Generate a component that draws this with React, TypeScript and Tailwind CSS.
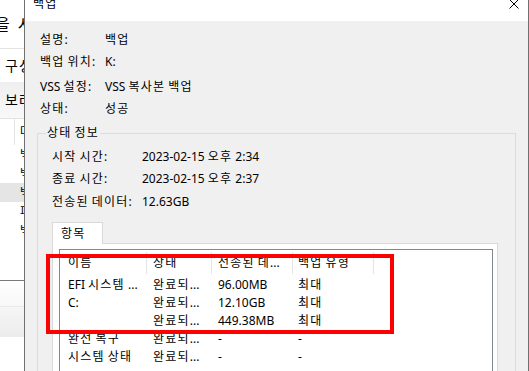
import React from "react";

const HANGUL = /([\uAC00-\uD7A3]+)/;

function T({ s }: { s: string }) {
  const parts = s.split(HANGUL);
  return (
    <span>
      {parts.map((p, i) =>
        p === "" ? null : /[\uAC00-\uD7A3]/.test(p) ? (
          <span key={i} className="tracking-[1.2px]">
            {p}
          </span>
        ) : (
          <React.Fragment key={i}>{p}</React.Fragment>
        )
      )}
    </span>
  );
}

function BackgroundWindow() {
  const glyphRows = ["백", "백", "백", "파", "백"];
  return (
    <div className="flex flex-col w-full h-full">
      <div className="h-[49px] shrink-0 border-b border-[#e3e3e3] flex items-center text-[16px] leading-none whitespace-nowrap">
        <span className="-ml-[5px]">을</span>
        <span className="ml-[8px]">시작</span>
      </div>
      <div className="h-[33px] shrink-0 flex items-center pl-[5px] text-[14px] leading-none whitespace-nowrap">
        <T s="구성" />
      </div>
      <div className="h-[37px] shrink-0 flex items-center pl-[5px] text-[14px] leading-none whitespace-nowrap bg-gradient-to-b from-[#efefef] to-[#f8f8f8] border-b border-[#e2e2e2]">
        <T s="보러" />
      </div>
      <div className="h-[162px] shrink-0 flex flex-col border-b border-[#7a7a7a]">
        <div className="h-[26px] flex items-stretch">
          <div className="w-[15px] h-full border-r border-[#e5e5e5]" />
          <div className="flex items-center pl-[5px] leading-none whitespace-nowrap">마</div>
        </div>
        {glyphRows.map((g, i) => (
          <div
            key={i}
            className={
              i === 2
                ? "h-[19px] flex items-center pl-[20px] leading-none whitespace-nowrap bg-[#e5e5e5]"
                : "h-[19px] flex items-center pl-[20px] leading-none whitespace-nowrap"
            }
          >
            {g}
          </div>
        ))}
      </div>
      <div className="h-[26px] shrink-0 bg-gradient-to-b from-white to-[#f8f8f8] border-b border-[#e8e8e8]" />
      <div className="h-[30px] shrink-0 bg-gradient-to-b from-[#f6f6f6] to-[#ececec]" />
    </div>
  );
}

function InfoRow({ label, value, labelW, extra }: { label: string; value: string; labelW: string; extra?: string }) {
  return (
    <div className={"flex h-[22px] items-center leading-none whitespace-nowrap " + (extra ?? "")}>
      <span className={labelW}>
        <T s={label} />
      </span>
      <span>
        <T s={value} />
      </span>
    </div>
  );
}

function ListView() {
  const rows = [
    ["EFI 시스템 ...", "완료되...", "96.00MB", "최대"],
    ["C:", "완료되...", "12.10GB", "최대"],
    ["", "완료되...", "449.38MB", "최대"],
    ["완전 복구", "완료되...", "-", "-"],
    ["시스템 상태", "완료되...", "-", "-"],
  ];
  return (
    <div className="border border-[#828790] bg-white h-[200px] flex flex-col">
      <div className="h-[26px] shrink-0 flex items-center">
        <div className="w-[87px] h-[22px] flex items-center pl-[8px] border-r border-[#e5e5e5] leading-none whitespace-nowrap">
          <T s="이름" />
        </div>
        <div className="w-[65px] h-[22px] flex items-center pl-[6px] border-r border-[#e5e5e5] leading-none whitespace-nowrap">
          <T s="상태" />
        </div>
        <div className="w-[81px] h-[22px] flex items-center pl-[6px] border-r border-[#e5e5e5] leading-none whitespace-nowrap">
          <T s="전송된 데..." />
        </div>
        <div className="w-[81px] h-[22px] flex items-center pl-[5px] border-r border-[#e5e5e5] leading-none whitespace-nowrap">
          <T s="백업 유형" />
        </div>
      </div>
      {rows.map((r, i) => (
        <div key={i} className="h-[18px] shrink-0 flex items-center leading-none whitespace-nowrap">
          <div className="w-[87px] pl-[8px]">
            <T s={r[0]} />
          </div>
          <div className="w-[65px] pl-[6px]">
            <T s={r[1]} />
          </div>
          <div className="w-[81px] pl-[6px]">
            <T s={r[2]} />
          </div>
          <div className="w-[81px] pl-[5px]">
            <T s={r[3]} />
          </div>
        </div>
      ))}
    </div>
  );
}

function Dialog() {
  return (
    <div className="absolute left-[24px] top-0 w-[505px] h-[440px] border-x border-[#707070] bg-[#f0f0f0] flex flex-col">
      <div className="h-[21px] shrink-0 bg-white flex justify-between items-start pl-[8px] pr-[9px]">
        <span className="-mt-[2px] leading-[12px]">
          <T s="백업" />
        </span>
        <svg width="10" height="10" viewBox="0 0 10 10" className="-mt-[1px]">
          <path d="M0.5 0.5 L9.5 9.5 M9.5 0.5 L0.5 9.5" stroke="#000" strokeWidth="1" fill="none" />
        </svg>
      </div>
      <div className="pt-[8px] pl-[15px] flex flex-col shrink-0">
        <InfoRow label="설명:" value="백업" labelW="w-[65px]" />
        <InfoRow label="백업 위치:" value="K:" labelW="w-[65px]" />
        <InfoRow label="VSS 설정:" value="VSS 복사본 백업" labelW="w-[65px]" extra="mt-[3px]" />
        <InfoRow label="상태:" value="성공" labelW="w-[65px]" />
      </div>
      <div className="relative mx-[12px] mt-[13px] border border-[#dcdcdc] grow pt-[12px] pl-[14px] flex flex-col">
        <span className="absolute -top-[8px] left-[8px] px-[1px] bg-[#f0f0f0] leading-[14px] whitespace-nowrap">
          <T s="상태 정보" />
        </span>
        <InfoRow label="시작 시간:" value="2023-02-15 오후 2:34" labelW="w-[90px]" />
        <InfoRow label="종료 시간:" value="2023-02-15 오후 2:37" labelW="w-[90px]" />
        <InfoRow label="전송된 데이터:" value="12.63GB" labelW="w-[90px]" extra="mt-[1px]" />
        <div className="mt-[9px] w-[51px] h-[22px] bg-white border border-b-0 border-[#d9d9d9] relative z-10 -mb-px flex items-center pl-[8px] leading-none whitespace-nowrap">
          <T s="항목" />
        </div>
        <div className="w-[446px] grow border border-[#d9d9d9] bg-white pt-[5px] pl-[6px] pr-[4px]">
          <ListView />
        </div>
      </div>
    </div>
  );
}

export default function App() {
  return (
    <div className="relative w-[529px] h-[371px] overflow-hidden bg-white text-black font-['Noto_Sans','Noto_Sans_CJK_KR',sans-serif] text-[12px]">
      <BackgroundWindow />
      <Dialog />
      <div className="absolute left-[46px] top-[254px] w-[348px] h-[80px] border-[4px] border-[#ff0000]" />
    </div>
  );
}
